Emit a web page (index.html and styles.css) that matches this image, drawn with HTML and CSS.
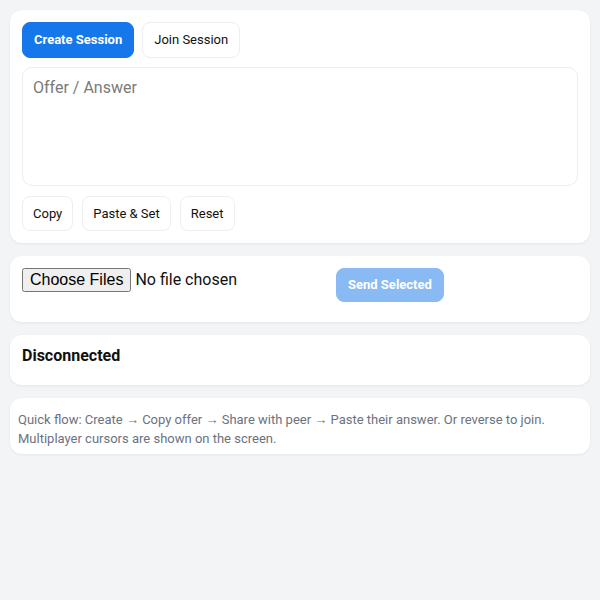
FILE: index.html
```html
<!DOCTYPE html>
<html lang="en">
<head>
<meta charset="utf-8">
<title>P2P Session</title>
<link rel="stylesheet" href="styles.css">
</head>
<body>
<main class="app">
  <section class="card session">
    <div class="row top-row">
      <button class="btn primary">Create Session</button>
      <button class="btn">Join Session</button>
    </div>
    <textarea class="sdp" placeholder="Offer / Answer"></textarea>
    <div class="row bottom-row">
      <button class="btn small">Copy</button>
      <button class="btn small">Paste &amp; Set</button>
      <button class="btn small">Reset</button>
    </div>
  </section>
  <section class="card files">
    <div class="file-row">
      <input type="file" multiple class="file-input">
      <button class="btn primary send" disabled>Send Selected</button>
    </div>
  </section>
  <section class="card status">
    <div class="status-text">Disconnected</div>
  </section>
  <section class="card help">
    <p class="help-text">Quick flow: Create → Copy offer → Share with peer → Paste their answer. Or reverse to join. Multiplayer cursors are shown on the screen.</p>
  </section>
</main>
</body>
</html>
```
FILE: styles.css
```css
* { box-sizing: border-box; }
html, body { margin: 0; padding: 0; }
body {
  background: #f3f4f6;
  font-family: Roboto, "Liberation Sans", Arial, sans-serif;
  color: #111;
}
.app {
  padding: 10px;
  display: flex;
  flex-direction: column;
  gap: 13px;
}
.card {
  background: #fff;
  border-radius: 12px;
  box-shadow: 0 1px 3px rgba(0,0,0,0.06);
}
.session { padding: 12px; }
.row { display: flex; gap: 8px; }
.top-row { margin-bottom: 9px; }
.bottom-row { margin-top: 10px; gap: 9px; }
.btn {
  font-family: Roboto, "Liberation Sans", Arial, sans-serif;
  font-size: 13px;
  line-height: 18px;
  height: 36px;
  padding: 0 11px;
  background: #fff;
  color: #111;
  border: 1px solid #eceef1;
  border-radius: 8px;
}
.btn.primary {
  background: #1677ea;
  border-color: #1677ea;
  color: #fff;
  font-weight: 700;
}
.btn.small { height: 35px; padding: 0 10px; }
.sdp {
  display: block;
  width: 100%;
  height: 119px;
  padding: 10px;
  border: 1px solid #eceef1;
  border-radius: 10px;
  font-family: Roboto, "Liberation Sans", Arial, sans-serif;
  font-size: 16px;
  resize: none;
  outline: none;
}
.sdp::placeholder { color: #7a7a7a; }
.files { padding: 12px 12px 20px; }
.file-row {
  display: flex;
  align-items: flex-start;
  gap: 12px;
}
.file-input {
  font-family: Roboto, "Liberation Sans", Arial, sans-serif;
  font-size: 16px;
  width: 302px;
  height: 24px;
}
.btn.send {
  height: 34px;
  padding: 0 11px;
  opacity: 0.5;
}
.status { padding: 12px 12px 20px; }
.status-text {
  font-weight: 700;
  font-size: 16px;
  line-height: 18px;
}
.help { padding: 12px 8px 6px; }
.help-text {
  margin: 0;
  font-size: 13px;
  line-height: 19px;
  color: #6b7280;
}
```
